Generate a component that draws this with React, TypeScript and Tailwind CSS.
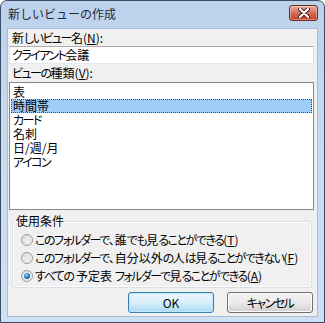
import React from 'react';

const jp = "[font-family:'Noto_Sans_CJK_JP',sans-serif] [font-feature-settings:'palt']";

const views = ['表', '時間帯', 'カード', '名刺', '日/週/月', 'アイコン'];

const radios = [
  { label: 'このフォルダーで、誰でも見ることができる', key: 'T', checked: false },
  { label: 'このフォルダーで、自分以外の人は見ることができない', key: 'F', checked: false },
  { label: 'すべての 予定表 フォルダーで見ることができる', key: 'A', checked: true },
];

// the dialog font has narrow proportional kana; tighten kana runs only
const Jp: React.FC<{ text: string }> = ({ text }) => (
  <>
    {text.split(/([\u3040-\u30ff]+)/).map((part, i) =>
      /[\u3040-\u30ff]/.test(part) ? (
        <span key={i} className="tracking-[-1.5px]">{part}</span>
      ) : (
        <React.Fragment key={i}>{part}</React.Fragment>
      )
    )}
  </>
);

const Radio: React.FC<{ checked: boolean }> = ({ checked }) => (
  <svg width="12" height="12" viewBox="0 0 12 12" className="shrink-0">
    <defs>
      <linearGradient id="rg" x1="0" y1="0" x2="1" y2="1">
        <stop offset="0" stopColor="#cfd2d4" />
        <stop offset="1" stopColor="#ffffff" />
      </linearGradient>
      <radialGradient id="dot" cx="0.4" cy="0.35" r="0.7">
        <stop offset="0" stopColor="#9be0ff" />
        <stop offset="0.5" stopColor="#2b8bd3" />
        <stop offset="1" stopColor="#114f8a" />
      </radialGradient>
    </defs>
    <circle cx="6" cy="6" r="5.5" fill="url(#rg)" stroke="#9a9a9a" strokeWidth="1" />
    <circle cx="6" cy="6" r="4" fill="none" stroke="#e6e6e6" strokeWidth="1" />
    {checked && <circle cx="6" cy="6" r="3" fill="url(#dot)" />}
  </svg>
);

const Mnemonic: React.FC<{ k: string }> = ({ k }) => (
  <>(<span className="underline underline-offset-1">{k}</span>)</>
);

export default function App() {
  return (
    <div className={`w-[325px] h-[323px] flex flex-col rounded-t-[7px] border border-[#3b4d63] bg-gradient-to-b from-[#bcd2ec] via-[#c9dbef] to-[#cfe0f2] text-[12px] leading-[14px] text-black ${jp}`}>
      {/* title bar */}
      <div className="h-[27px] flex items-start justify-between pl-[7px] pr-[6px] pt-[4px]">
        <span className="mt-[2px] text-[#1b2838] [font-feature-settings:normal]">新しいビューの作成</span>
        <div className="w-[29px] h-[16px] rounded-[3px] border border-[#6d2b22] bg-gradient-to-b from-[#eab0a4] via-[#d26c56] to-[#c0402a] flex items-center justify-center shadow-[inset_0_0_0_1px_rgba(255,255,255,0.35)]">
          <svg width="12" height="10" viewBox="0 0 12 10">
            <path d="M2 1 L10 9 M10 1 L2 9" stroke="#4a1a14" strokeWidth="4" strokeLinecap="round" />
            <path d="M2 1 L10 9 M10 1 L2 9" stroke="#ffffff" strokeWidth="2.2" strokeLinecap="round" />
          </svg>
        </div>
      </div>

      {/* client area */}
      <div className="flex-1 mx-[6px] mb-[5px] bg-[#f0f0f0] border border-[#a9bdd2] flex flex-col pl-[1px] pr-[3px]">
        <div className="mt-[2px] pl-[3px]">
          <Jp text="新しいビュー名" /><Mnemonic k="N" />:
        </div>
        <div className="mt-[1px] h-[18px] border border-[#abadb3] border-l-[#e2e3ea] border-r-[#dbdfe6] border-b-[#e3e9ef] bg-white pl-[2px] flex items-center">
          <Jp text="クライアント会議" />
        </div>
        <div className="mt-[2px] pl-[3px]">
          <Jp text="ビューの種類" /><Mnemonic k="V" />:
        </div>
        <div className="mt-[2px] h-[128px] border border-[#828790] bg-white pt-[2px] px-[1px] leading-[12px]">
          {views.map((v, i) => (
            <div
              key={v}
              className={
                i === 1
                  ? 'h-[14px] pl-[1px] bg-[#9fcdf6] border border-dotted border-[#6b4420] flex items-center'
                  : 'h-[14px] pl-[2px] flex items-center'
              }
            >
              <Jp text={v} />
            </div>
          ))}
        </div>

        <fieldset className="mt-[4px] ml-[3px] mr-[2px] h-[74px] border border-[#d5dfe5] rounded-[3px] shadow-[inset_0_0_0_1px_#ffffff]">
          <legend className="ml-[1px] px-[2px]">使用条件</legend>
          <div className="mt-[3px] pl-[8px] flex flex-col">
            {radios.map((r) => (
              <div key={r.key} className="h-[18px] flex items-center gap-[2px] whitespace-nowrap">
                <Radio checked={r.checked} />
                <span>
                  <Jp text={r.label} />
                  <Mnemonic k={r.key} />
                </span>
              </div>
            ))}
          </div>
        </fieldset>

        <div className="mt-[4px] flex justify-end gap-[13px] pr-[1px]">
          <button className="w-[86px] h-[21px] rounded-[3px] border border-[#3c7fb1] bg-gradient-to-b from-[#eaf6fd] via-[#d9f0fc] to-[#a7d9f5] shadow-[inset_0_0_0_1px_#bfe7fb]">
            OK
          </button>
          <button className="w-[86px] h-[21px] rounded-[3px] border border-[#707070] bg-gradient-to-b from-[#f2f2f2] via-[#ebebeb] to-[#cfcfcf] shadow-[inset_0_0_0_1px_#fcfcfc]">
            <Jp text="キャンセル" />
          </button>
        </div>
      </div>
    </div>
  );
}
